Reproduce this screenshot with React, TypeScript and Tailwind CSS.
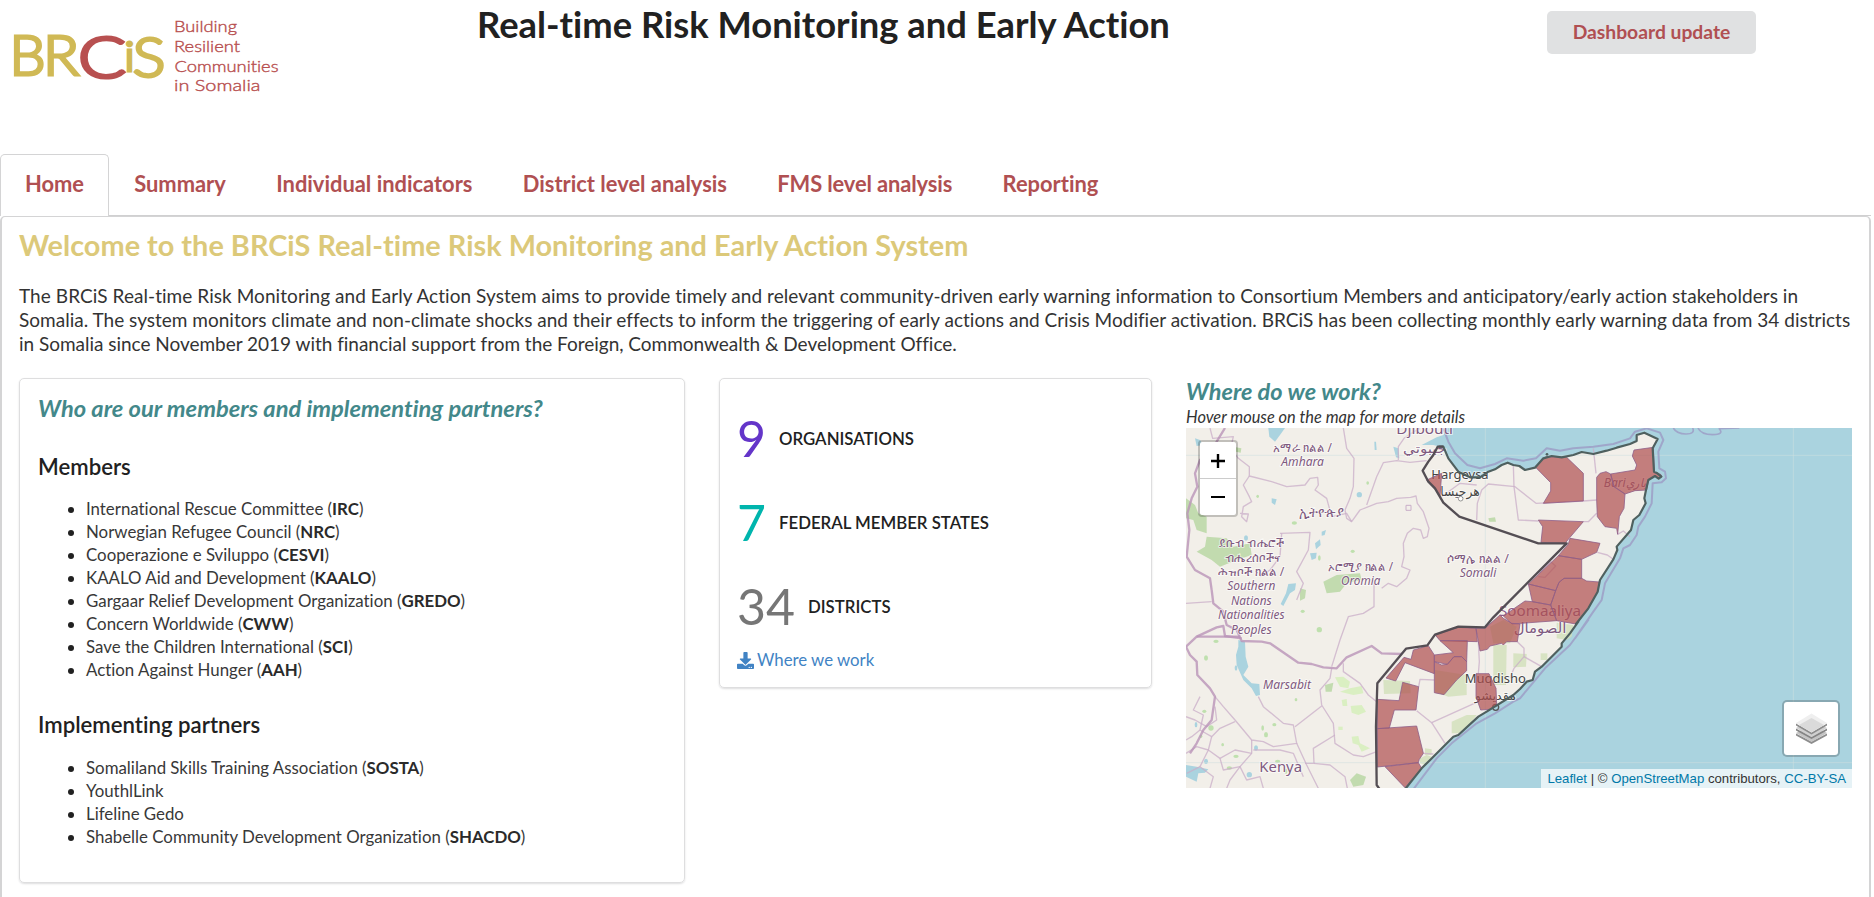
import { FaDownload } from "react-icons/fa";

type Pair = [number, number];

/** Converts "x,y x,y" pairs to a shifted point list in map units. */
const shift = (offset: Pair, pts: string) =>
  pts
    .trim()
    .split(/\s+/)
    .map((p) => {
      const [x, y] = p.split(",").map(Number);
      return `${x + offset[0]},${y + offset[1]}`;
    })
    .join(" ");

const NW: Pair = [-18, -174];
const SW: Pair = [-18, 456];
const MID: Pair = [582, -24];
const SOUTH: Pair = [552, 516];
const NE: Pair = [1002, -24];
const SE: Pair = [1002, 576];

const coast = [
  shift(MID, "205,15 190,45 170,52 125,75 160,75 185,82 196,90 205,115 235,155 270,172 300,172 325,155 345,148 365,135 383,128 400,135 418,138 435,150 465,143 490,115 515,108 545,112 580,105 605,96"),
  shift(NE, "220,102 260,92 290,83 330,72 350,63 350,45 373,38 413,57 398,85 402,155 412,160 424,170 416,176 405,168 385,180 378,210 373,235 377,250 358,285 340,300 333,330 290,380 292,390 280,418 240,480 233,515 205,565 168,612"),
  shift(SE, "175,5 150,40 125,70 125,80 65,140 45,155 38,180 20,185 0,207"),
  shift(SOUTH, "430,285 350,335 325,350 265,405 250,410 175,485 155,505 105,568"),
].join(" ");

const somaliCoast = [
  shift(MID, "176,80 190,80 205,115 235,155 270,172 300,172 325,155 345,148 365,135 383,128 400,135 418,138 435,150 465,143 490,115 515,108 545,112 580,105 605,96"),
  coast.split(" ").slice(24).join(" "),
].join(" ");

const border = [
  shift(MID, "190,80 173,80 160,105 145,125 128,152 145,185 165,205 190,248 238,290 475,370 560,370 340,592"),
  shift(SOUTH, "345,82 265,80 195,104 172,136 108,146 22,250 18,380 20,555 28,566"),
].join(" ");

const districts: string[] = [
  shift(MID, "140,180 185,160 180,230 165,208"),
  shift(NE, "45,140 78,110 140,112 190,160 190,243 70,250 92,213 92,188"),
  shift(NE, "230,172 240,160 258,155 272,162 282,200 315,222 312,265 298,290 293,343 290,325 255,320 232,290 230,240"),
  shift(NE, "272,162 345,150 350,135 337,108 342,90 400,82 403,158 422,163 426,170 416,176 405,168 385,182 380,210 345,212 315,222 282,200"),
  shift(NE, "55,300 190,305 150,352 135,370 63,367 68,320"),
  shift(NE, "150,355 240,370 230,397 185,418 115,407 145,372"),
  shift(NE, "115,407 185,418 185,475 132,475 117,487 107,512 25,492"),
  shift(NE, "132,475 185,475 200,483 238,486 233,515 205,565 168,612 110,602 92,555 107,512 117,487"),
  shift(NE, "25,492 107,512 92,555 37,545"),
  shift(NE, "37,545 92,555 110,602 -24,612 -50,588 15,543"),
  shift(SOUTH, "400,55 425,70 450,72 442,125 410,125 400,135 395,130 360,138 352,148 330,153 318,85 345,85 390,45"),
  shift(SOUTH, "195,104 265,82 318,85 322,125 210,122"),
  shift(SOUTH, "210,122 292,122 290,185 275,170 252,170 232,193 193,185 193,165 250,158"),
  shift(SOUTH, "193,185 215,195 232,193 252,170 275,170 290,185 290,212 260,240 222,284 193,278"),
  shift(SOUTH, "130,150 175,137 193,165 193,221 105,188 77,243 48,234 102,172 123,178"),
  shift(SOUTH, "98,247 146,260 138,330 73,330 58,384 22,386 22,298 87,302"),
  shift(SOUTH, "22,386 140,378 160,460 148,478 145,488 22,501"),
  shift(SOUTH, "45,500 145,488 155,505 105,563"),
  shift(SOUTH, "318,221 357,221 378,265 380,315 360,328 332,330 318,290"),
];

const adminLines: string[] = [
  shift(NW, "90,174 98,205 160,200 152,235 175,265 208,290 208,318 275,335 320,350 375,345 390,325 413,322 415,345 405,360 440,385 455,440 500,430 515,455 540,420 590,400 625,395 650,385 692,382 708,378 712,400 730,425 747,475 742,500 730,505 722,480 700,475 682,490 670,520 672,560 665,590 690,600 680,625 650,650 625,640 605,655"),
  shift(NW, "490,174 500,235 522,265 520,350 510,385 495,420 500,445 515,455"),
  shift(NW, "208,318 190,345 208,380 215,395 190,410 185,440 200,455 205,432 180,430"),
  shift(NW, "560,405 590,320 610,278 650,272 690,277 740,272"),
  shift(NW, "655,270 655,230 672,205 690,192 720,175"),
  shift(NW, "300,490 390,487 385,540 350,605 370,640 350,690"),
  shift(NW, "305,490 300,560 270,600 240,620"),
  shift(SW, "582,0 582,80 550,100 505,110 480,180 455,260"),
  shift(SW, "18,70 95,65"),
  shift(SW, "490,250 490,275 540,310 565,345 590,365"),
  shift(SW, "455,265 450,295 420,330 425,375 460,430 465,490 520,525 550,530 590,515"),
  shift(SW, "235,350 250,380 310,430 340,435 350,490 280,500 250,485 215,480 165,420 130,380 105,350"),
  shift(SW, "425,378 345,440"),
  shift(SW, "350,490 380,555 415,625"),
  shift(SW, "465,465 400,505 402,550 375,550"),
  shift(SW, "402,550 450,555 495,590 502,625"),
  shift(SW, "215,480 215,520 180,560 150,600 140,625"),
  shift(SW, "220,510 300,510 340,520 370,590"),
  shift(SW, "18,410 45,420 80,440 110,420 105,380"),
  shift(SW, "60,350 40,390 70,405 60,450 95,470 120,445 165,425"),
  shift(SW, "95,470 85,510 120,535 165,510 215,520"),
  shift(SW, "18,520 50,500 85,510 60,560 100,590 90,625"),
  shift(SW, "120,535 130,570 180,560 200,600 240,590 250,625"),
  shift(SW, "18,480 35,470 60,450"),
  shift(SW, "60,560 20,580"),
  shift(MID, "290,300 292,250 305,210 325,192 405,200 468,250 610,243"),
  shift(MID, "400,135 402,200 415,300 475,303"),
  shift(MID, "185,230 240,190 290,195"),
  shift(NE, "220,85 228,160"),
  shift(NE, "190,243 230,240"),
  shift(NE, "190,305 205,305 230,280"),
  shift(NE, "232,397 262,405 280,418"),
  shift(NE, "293,343 310,333 330,350"),
  shift(NE, "55,470 75,472 107,438 92,425 55,460"),
  shift(SOUTH, "325,125 328,185 325,221"),
  shift(SOUTH, "442,125 462,145 462,170 432,205 420,235"),
  shift(SOUTH, "462,170 515,200"),
  shift(SOUTH, "318,308 185,368 140,332"),
  shift(SOUTH, "185,368 225,430"),
  shift(SOUTH, "193,240 150,238 146,260"),
  shift(SOUTH, "160,460 190,462"),
];

const stateLines: string[] = [
  shift(NW, "135,174 110,215 60,270 45,310 52,350 35,385 22,430 28,480 20,560 45,600 90,625 95,660"),
  shift(SW, "95,30 100,70 130,95 140,135 170,150 185,183 245,185 270,190 355,248 395,252 430,262 470,265 500,232 575,198 605,220 665,222"),
  shift(SW, "18,200 50,170 110,142 130,138 135,168 185,175"),
  shift(SW, "50,170 180,170"),
  shift(SW, "18,200 30,225 50,245 52,285 90,325 105,350 95,420 70,450 50,490 30,520"),
];

const maritime = [
  shift(MID, "190,25 205,65 225,100 262,135 300,145 345,132 380,115 430,122 468,115 500,85 540,92 580,85 640,80"),
  shift(NE, "280,72 330,55 345,35 380,25 420,38 430,60 415,95 418,145 435,155 438,175 425,187 398,190 395,250 375,290 355,320 350,345 330,375 310,385 300,415 255,490 245,540 220,575 165,655"),
  shift(SE, "205,0 150,75 75,145 0,235"),
  shift(SOUTH, "430,305 375,340 320,370 245,430 200,475 130,568"),
].join(" ");

const greens: string[] = [
  shift(NW, "18,385 45,405 55,430 80,440 80,490 50,480 40,450 18,445"),
  shift(NW, "80,500 140,505 160,530 210,520 215,555 170,570 120,590 95,570 50,545 75,530"),
  shift(NW, "430,635 470,615 540,610 545,630 500,640 480,665 440,670"),
  shift(NW, "168,232 184,235 182,248 168,245"),
  shift(SW, "360,25 378,30 375,55 360,62"),
  shift(SW, "510,600 530,580 558,590 550,615 520,620"),
  shift(SW, "435,315 460,308 455,335 437,335"),
  shift(NW, "925,445 945,442 948,455 928,455"),
];

const paleGreens: string[] = [
  shift(SW, "465,292 490,290 510,305 505,325 480,320"),
  shift(SW, "480,335 510,325 545,318 550,340 520,345"),
  shift(SW, "485,360 500,357 502,378 488,378"),
  shift(SW, "512,378 545,375 558,395 535,405 515,398"),
  shift(SW, "515,470 535,468 540,490 570,505 545,515 535,495 518,490"),
  shift(SW, "475,440 488,440 488,450 475,450"),
  shift(SW, "610,300 690,303 692,340 612,342"),
  shift(SOUTH, "245,365 290,345 320,345 290,385 265,400 245,400"),
  shift(SOUTH, "370,135 410,135 408,255 370,255"),
  shift(SOUTH, "430,160 470,162 468,200 430,202"),
  shift(SOUTH, "512,160 532,160 532,180 512,180"),
  shift(SOUTH, "560,68 610,75 605,110 590,120 560,115"),
  shift(SOUTH, "195,210 290,225 290,285 235,290 195,275"),
  shift(SOUTH, "165,445 185,448 185,465 165,465"),
  shift(SOUTH, "150,475 170,465 185,470 170,495 150,490"),
  shift(SOUTH, "360,80 400,60 440,80 420,130 370,130"),
];

const lakes: string[] = [
  shift(NW, "265,174 315,174 300,195 285,215 268,200"),
  shift(NW, "45,205 60,210 70,225 50,228"),
  shift(NW, "405,520 420,508 422,525 408,538"),
  shift(NW, "390,550 410,548 408,565 395,570"),
  shift(NW, "425,485 438,480 434,495 425,497"),
  shift(NW, "275,385 290,388 285,405 275,398"),
  shift(SW, "175,180 195,185 197,230 205,260 190,285 215,310 238,312 240,345 228,348 215,325 190,300 170,255 168,225 175,200"),
  shift(SW, "325,12 348,10 345,30 330,40 310,78 302,72 318,40"),
  shift(SW, "18,555 50,560 85,568 75,578 55,580 50,605 18,590"),
  shift(NW, "583,215 588,215 590,240 584,240"),
  shift(NW, "640,230 655,235 658,265 648,262"),
];

const specks: Pair[] = [
  [215, 205], [180, 330], [325, 285], [400, 390], [500, 370], [520, 200], [545, 165],
  [60, 690], [90, 640], [150, 720], [55, 850], [75, 900], [110, 950], [60, 1000], [150, 985],
  [230, 900], [265, 890], [190, 1040], [330, 815], [240, 920], [130, 1020], [30, 890],
  [350, 550], [400, 605], [45, 925], [210, 960], [275, 1000], [300, 1030],
];

type Label = { x: number; y: number; t: string; size: number; w?: number; fill?: string; italic?: boolean };
const labels: Label[] = [
  { x: 350, y: 71, t: "አማራ ክልል /", size: 37, w: 176 },
  { x: 350, y: 114, t: "Amhara", size: 36, w: 128, italic: true },
  { x: 405, y: 266, t: "ኢትዮጵያ", size: 43, w: 132 },
  { x: 196, y: 358, t: "ደቡብ ብሔሮች", size: 37, w: 192 },
  { x: 198, y: 402, t: "ብሔረሰቦችና", size: 37, w: 164 },
  { x: 196, y: 445, t: "ሕዝቦች ክልል /", size: 37, w: 198 },
  { x: 196, y: 487, t: "Southern", size: 36, w: 144, italic: true },
  { x: 196, y: 530, t: "Nations", size: 36, w: 122, italic: true },
  { x: 196, y: 574, t: "Nationalities", size: 36, w: 200, italic: true },
  { x: 196, y: 617, t: "Peoples", size: 36, w: 122, italic: true },
  { x: 524, y: 428, t: "ኦሮሚያ ክልል /", size: 37, w: 194 },
  { x: 524, y: 472, t: "Oromia", size: 36, w: 118, italic: true },
  { x: 876, y: 405, t: "ሶማሌ ክልል /", size: 37, w: 186 },
  { x: 876, y: 448, t: "Somali", size: 36, w: 110, italic: true },
  { x: 303, y: 783, t: "Marsabit", size: 36, w: 144, italic: true },
  { x: 284, y: 1033, t: "Kenya", size: 42, w: 128 },
  { x: 716, y: 18, t: "Djibouti", size: 42, w: 170 },
  { x: 716, y: 75, t: "جيبوتي", size: 38, w: 130 },
  { x: 1062, y: 563, t: "Soomaaliya", size: 42, w: 246, fill: "#8a5a86" },
  { x: 1062, y: 615, t: "الصومال", size: 42, w: 158 },
  { x: 1286, y: 178, t: "Bari", size: 36, w: 66, italic: true },
  { x: 1350, y: 178, t: "باري", size: 36, w: 60, italic: true },
  { x: 822, y: 153, t: "Hargeysa", size: 40, w: 172, fill: "#444" },
  { x: 822, y: 204, t: "هرجيسا", size: 38, w: 118, fill: "#444" },
  { x: 928, y: 765, t: "Muqdisho", size: 40, w: 184, fill: "#444" },
  { x: 928, y: 815, t: "مقديشو", size: 36, w: 124, fill: "#444" },
];

function MapDrawing() {
  return (
    <svg viewBox="0 0 1998 1080" className="block h-[360px] w-[666px] bg-[#aad3df]" fill="none" strokeLinejoin="round">
      <polygon points={`0,0 ${coast} 0,1084`} fill="#f2efe9" />
      {greens.map((p, i) => <polygon key={i} points={p} fill="#b5d6a0" opacity={0.8} />)}
      {paleGreens.map((p, i) => <polygon key={i} points={p} fill={i < 6 ? "#d2efb4" : "#cfdfb5"} opacity={0.75} />)}
      {lakes.map((p, i) => <polygon key={i} points={p} fill="#aad3df" />)}
      {specks.map(([x, y], i) => <ellipse key={i} cx={x} cy={y} rx={4 + (i % 3) * 2} ry={5 + (i % 2) * 3} fill={i % 4 === 1 ? "#aad3df" : "#bfe0ae"} />)}
      <path d="M898,0V1080 M1822,0V1080 M0,82H1998 M0,1004H1998" stroke="#cfe0e0" strokeWidth={3} opacity={0.55} />
      {adminLines.map((p, i) => <polyline key={i} points={p} stroke="#c9aec8" strokeWidth={4} opacity={0.75} />)}
      {stateLines.map((p, i) => <polyline key={i} points={p} stroke="#b993b8" strokeWidth={7} opacity={0.8} />)}
      <rect x={660} y={232} width={15} height={15} stroke="#c9aec8" strokeWidth={3} />
      <polyline points={maritime} stroke="#9c9bc4" strokeWidth={6} opacity={0.8} />
      <path d="M1462,0Q1472,18 1500,18T1520,0 M1536,0Q1545,20 1580,20T1600,2L1660,0" stroke="#9c9bc4" strokeWidth={5} opacity={0.8} />
      <g fontFamily="'Noto Sans', 'DejaVu Sans', sans-serif" textAnchor="middle">
        {labels.map((l) => (
          <text
            key={l.t}
            x={l.x}
            y={l.y}
            fontSize={l.size}
            fontStyle={l.italic ? "italic" : "normal"}
            textLength={l.w}
            lengthAdjust="spacingAndGlyphs"
            fill={l.fill ?? "#7f5a80"}
            stroke="#ffffff"
            strokeOpacity={0.6}
            strokeWidth={6}
            paintOrder="stroke"
          >
            {l.t}
          </text>
        ))}
      </g>
      <circle cx={824} cy={212} r={7} stroke="#666" strokeWidth={2} fill="#fff" />
      <circle cx={929} cy={838} r={9} stroke="#555" strokeWidth={4} />
      {districts.map((p, i) => <polygon key={i} points={p} fill="#af4f4f" fillOpacity={0.7} stroke="#8f5f8a" strokeOpacity={0.8} strokeWidth={3} />)}
      <polyline points={somaliCoast} stroke="#4f605f" strokeWidth={6.5} />
      <polyline points={border} stroke="#544e54" strokeWidth={7} />
      <circle cx={1083} cy={79} r={4} fill="#4f605f" />
    </svg>
  );
}

function LayersIcon() {
  return (
    <svg viewBox="0 0 31 31" className="h-[31px] w-[31px]">
      <path d="M0,20.5 15.5,28.5 31,20.5V22.5L15.5,31 0,22.5Z" fill="#8d8d8d" />
      <path d="M0,20 15.5,11 31,20 15.5,29Z" fill="#c4c4c4" />
      <path d="M0,15.5 15.5,24 31,15.5V17.5L15.5,26 0,17.5Z" fill="#858585" />
      <path d="M0,15 15.5,6 31,15 15.5,24Z" fill="#d0d0d0" />
      <path d="M0,10.5 15.5,19.5 31,10.5V12.5L15.5,21.5 0,12.5Z" fill="#8d8d8d" />
      <path d="M0,10 15.5,0.5 31,10 15.5,19.5Z" fill="#efefef" />
      <path d="M3,12 15.5,5 28,12 15.5,19.3Z" fill="#dadada" />
    </svg>
  );
}

function Logo() {
  return (
    <svg viewBox="0 0 300 110" className="block h-[110px] w-[300px]" fontFamily="Lato, sans-serif">
      <g fontSize={55} fontWeight={300} fill="#d0b955" stroke="#d0b955" strokeWidth={3}>
        <text x={9.5} y={75.3} textLength={36} lengthAdjust="spacingAndGlyphs">B</text>
        <text x={43} y={75.3} textLength={36} lengthAdjust="spacingAndGlyphs">R</text>
        <text x={124.5} y={71} fontSize={41} textLength={10} lengthAdjust="spacingAndGlyphs">i</text>
        <text x={132.5} y={77} fontSize={56} textLength={33} lengthAdjust="spacingAndGlyphs">S</text>
      </g>
      <text x={78} y={77.5} fontSize={58} fontWeight={300} fill="#b85050" stroke="#b85050" strokeWidth={3.2} textLength={48} lengthAdjust="spacingAndGlyphs">C</text>
      <g fontSize={16.2} fontWeight={300} fill="#b85050" stroke="#b85050" strokeWidth={0.4}>
        <text x={174} y={32.3} textLength={63} lengthAdjust="spacingAndGlyphs">Building</text>
        <text x={174} y={52} textLength={66} lengthAdjust="spacingAndGlyphs">Resilient</text>
        <text x={174.5} y={71.8} textLength={104} lengthAdjust="spacingAndGlyphs">Communities</text>
        <text x={174} y={91.3} textLength={86.5} lengthAdjust="spacingAndGlyphs">in Somalia</text>
      </g>
    </svg>
  );
}

const tabs: [string, string][] = [
  ["Summary", ""],
  ["Individual indicators", ""],
  ["District level analysis", ""],
  ["FMS level analysis", "tracking-[-0.12px]"],
  ["Reporting", ""],
];

const members: [string, string?][] = [
  ["International Rescue Committee", "IRC"],
  ["Norwegian Refugee Council", "NRC"],
  ["Cooperazione e Sviluppo", "CESVI"],
  ["KAALO Aid and Development", "KAALO"],
  ["Gargaar Relief Development Organization", "GREDO"],
  ["Concern Worldwide", "CWW"],
  ["Save the Children International", "SCI"],
  ["Action Against Hunger", "AAH"],
];

const partners: [string, string?][] = [
  ["Somaliland Skills Training Association", "SOSTA"],
  ["YouthlLink"],
  ["Lifeline Gedo"],
  ["Shabelle Community Development Organization", "SHACDO"],
];

function OrgList({ items }: { items: [string, string?][] }) {
  return (
    <ul className="list-disc pl-12 text-[16.85px] leading-[23px] text-[#383838] marker:text-[#212121]">
      {items.map(([name, code]) => (
        <li key={name}>
          {name}
          {code && <> (<b className="font-bold text-[#2a2a2a]">{code}</b>)</>}
        </li>
      ))}
    </ul>
  );
}

function Stat({ value, label, color }: { value: string; label: string; color: string }) {
  return (
    <div className="flex h-[84px] items-center">
      <span className={`-mt-[2px] text-[50px] leading-none ${color}`}>{value}</span>
      <span className="ml-[13px] text-[16.8px] font-semibold">{label}</span>
    </div>
  );
}

export default function App() {
  return (
    <div className="h-[897px] w-full overflow-hidden bg-white font-['Lato',sans-serif] text-[#212121] [font-variant-ligatures:none]">
      <header className="flex h-[154px] items-start">
        <div className="w-[477px]"><Logo /></div>
        <h1 className="w-[1070px] pt-[2px] text-[36.35px] leading-[44px] font-bold whitespace-nowrap">
          Real-time Risk Monitoring and Early Action
        </h1>
        <button className="mt-[11px] h-[43px] w-[209px] rounded-[5px] bg-[#e0e1e2] text-[19.3px] font-bold text-[#b05052]">
          Dashboard update
        </button>
      </header>

      <nav className="flex h-[62px] w-[1871px] items-stretch border-b border-[#d0d0d1] text-[21.9px] font-bold text-[#b05052]">
        <a className="-mb-px flex w-[109px] items-center justify-center rounded-t-[5px] border border-b-0 border-[#d4d4d5] bg-white pb-[3px]">Home</a>
        {tabs.map(([name, tracking]) => (
          <a key={name} className={`flex items-center px-[25.2px] ${tracking}`}>{name}</a>
        ))}
      </nav>

      <main className="h-[700px] w-[1871px] rounded-t-[5px] border-2 border-t border-[#d4d4d5] pr-[17px] pl-[17px]">
        <h2 className="mt-[10px] text-[28.9px] leading-9 font-bold text-[#dcc97a]">
          Welcome to the BRCiS Real-time Risk Monitoring and Early Action System
        </h2>
        <p className="mt-[21px] text-[19px] leading-6 whitespace-nowrap text-[#333]">
          <span className="tracking-[0.06px]">The BRCiS Real-time Risk Monitoring and Early Action System aims to provide timely and relevant community-driven early warning information to Consortium Members and anticipatory/early action stakeholders in</span><br />
          <span className="tracking-[0.011px]">Somalia. The system monitors climate and non-climate shocks and their effects to inform the triggering of early actions and Crisis Modifier activation. BRCiS has been collecting monthly early warning data from 34 districts</span><br />
          <span className="tracking-[-0.022px]">in Somalia since November 2019 with financial support from the Foreign, Commonwealth &amp; Development Office.</span>
        </p>

        <div className="mt-[22px] flex items-start gap-[34px]">
          <section className="h-[505px] w-[666px] rounded-[5px] border border-[#dededf] pl-[18px] shadow-[0_1px_2px_rgba(34,36,38,0.15)]">
            <h3 className="mt-[13px] text-[23.7px] leading-8 font-bold text-[#43888a] italic">
              Who are our members and implementing partners?
            </h3>
            <h4 className="mt-[27px] text-[22.2px] leading-8 font-semibold">Members</h4>
            <div className="mt-[14px]"><OrgList items={members} /></div>
            <h4 className="mt-[28px] text-[22.2px] leading-8 font-semibold">Implementing partners</h4>
            <div className="mt-[15px]"><OrgList items={partners} /></div>
          </section>

          <section className="h-[310px] w-[433px] rounded-[5px] border border-[#dededf] pt-[18px] pl-[17px] shadow-[0_1px_2px_rgba(34,36,38,0.15)]">
            <Stat value="9" label="ORGANISATIONS" color="text-[#6435c9]" />
            <Stat value="7" label="FEDERAL MEMBER STATES" color="text-[#00b5ad]" />
            <Stat value="34" label="DISTRICTS" color="text-[#767676]" />
            <a className="-mt-px flex items-center gap-[3px] text-[16.8px] leading-6 text-[#4183c4]">
              <FaDownload className="h-[17px] w-[17px]" />
              Where we work
            </a>
          </section>

          <section className="w-[666px]">
            <h3 className="-mt-[2px] text-[23.5px] leading-[30px] font-bold text-[#43888a] italic">Where do we work?</h3>
            <p className="h-[22px] text-[16.4px] leading-[22px] text-[#333] italic">Hover mouse on the map for more details</p>
            <div className="relative h-[360px] overflow-hidden">
              <MapDrawing />
              <div className="absolute top-[12px] left-[12px] h-[77px] w-[40px] rounded-[4px] border-2 border-black/20 bg-white bg-clip-padding">
                <div className="flex h-[37px] items-center justify-center border-b border-[#ccc] pt-px">
                  <svg viewBox="0 0 16 16" className="h-4 w-4"><path d="M1 8H15M8 1V15" stroke="#000" strokeWidth="2.4" /></svg>
                </div>
                <div className="flex h-[36px] items-center justify-center">
                  <svg viewBox="0 0 16 16" className="h-4 w-4"><path d="M1 8H15" stroke="#000" strokeWidth="2" /></svg>
                </div>
              </div>
              <div className="absolute right-[12px] bottom-[31px] flex h-[57px] w-[58px] items-center justify-center rounded-[5px] border-2 border-black/20 bg-white bg-clip-padding">
                <LayersIcon />
              </div>
              <div className="absolute right-0 bottom-0 h-[19px] bg-white/70 pr-[6px] pl-[6px] font-['Liberation_Sans',Arial,sans-serif] text-[13.2px] leading-[19px] whitespace-nowrap text-[#333]">
                <span className="text-[#0078a8]">Leaflet</span> | © <span className="text-[#0078a8]">OpenStreetMap</span> contributors, <span className="text-[#0078a8]">CC-BY-SA</span>
              </div>
            </div>
          </section>
        </div>
      </main>
    </div>
  );
}
